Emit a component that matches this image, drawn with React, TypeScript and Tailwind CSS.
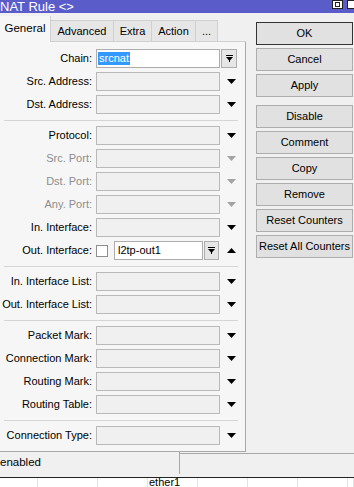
import React from 'react';

const FONT = { fontFamily: '"Liberation Sans", Arial, sans-serif' };

const Tri: React.FC<{ up?: boolean; dim?: boolean }> = ({ up, dim }) => (
  <svg width="9" height="5" viewBox="0 0 9 5" className="shrink-0">
    <polygon points={up ? '0,5 9,5 4.5,0' : '0,0 9,0 4.5,5'} fill={dim ? '#a3a3a3' : '#000'} />
  </svg>
);

// small "drop-down with bar" button used on chain / interface fields
const DropBtn: React.FC<{ className: string }> = ({ className }) => (
  <div className={`flex h-[19px] items-center justify-center border border-[#adadad] bg-[#e6e6e6] ${className}`}>
    <svg width="7" height="7" viewBox="0 0 7 7">
      <rect x="0" y="0" width="7" height="1" fill="#000" />
      <polygon points="0,2 7,2 3.5,6" fill="#000" />
      <rect x="3" y="5" width="1" height="2" fill="#000" />
    </svg>
  </div>
);

const Field: React.FC = () => (
  <div className="h-[19px] w-[124px] shrink-0 border border-[#b9b9b9] bg-[#f0f0f0]" />
);

const Row: React.FC<{ label: string; dim?: boolean; children?: React.ReactNode }> = ({ label, dim, children }) => (
  <div className="flex h-[23px] items-center">
    <div className={dim ? 'w-[92px] shrink-0 text-right text-[#8d8d8d]' : 'w-[92px] shrink-0 text-right text-black'}>{label}</div>
    <div className="ml-[4px] flex items-center">
      {children ?? (
        <>
          <Field />
          <div className="ml-[7px]">
            <Tri dim={dim} />
          </div>
        </>
      )}
    </div>
  </div>
);

const Sep: React.FC = () => <div className="mx-[4px] mb-[3px] mt-[4px] h-px w-[234px] bg-[#d5d5d5]" />;

const Btn: React.FC<{ label: string; main?: boolean; className?: string }> = ({ label, main, className = '' }) => (
  <div
    className={`flex h-[23px] w-[97px] items-center justify-center bg-[#e1e1e1] text-black ${
      main ? 'border border-[#333333]' : 'border border-[#adadad]'
    } ${className}`}
  >
    {label}
  </div>
);

export default function App() {
  const tabs = ['Advanced', 'Extra', 'Action', '...'];
  const tabW = ['w-[63px]', 'w-[38px]', 'w-[44px]', 'w-[22px]'];
  const cols = ['w-[38px]', 'w-[60px]', 'w-[50px]', 'w-[50px]', 'w-[50px]', 'w-[50px]', 'w-[50px]', 'w-[6px]'];

  return (
    <div className="flex h-[487px] w-[354px] flex-col overflow-hidden bg-[#f0f0f0] text-[11px]" style={FONT}>
      {/* title bar */}
      <div className="flex h-[13px] shrink-0 items-center justify-between bg-[#5a5dc9] text-[13px] leading-none text-white">
        <span>NAT Rule &lt;&gt;</span>
        <div className="flex items-start self-start">
          <div className="mr-[4px] h-[9px] w-[11px] border border-[#222] bg-white">
            <div className="ml-[2px] mt-[1px] h-[5px] w-[5px] border border-[#222]" />
          </div>
          <div className="h-[9px] w-[7px] border border-r-0 border-[#222] bg-white" />
        </div>
      </div>

      <div className="flex h-[439px] shrink-0">
        {/* left: tabs + panel */}
        <div className="flex w-[246px] shrink-0 flex-col">
          <div className="flex h-[29px] items-end">
            <div className="flex h-[26px] w-[51px] items-center justify-center border-r border-[#d0d0d0] bg-[#f6f6f6] pb-[1px] text-[11.5px]">
              General
            </div>
            {tabs.map((t, i) => (
              <div
                key={t}
                className={`flex h-[22px] items-center justify-center border-r border-t border-b border-[#d0d0d0] bg-[#e6e6e6] ${tabW[i]}`}
              >
                {t}
              </div>
            ))}
            <div className="h-px flex-1 bg-[#d0d0d0]" />
          </div>

          <div className="flex-1 border-b border-r border-[#a8a8a8] bg-[#f6f6f6] pt-[5px]">
            <Row label="Chain:">
              <div className="flex h-[19px] w-[124px] items-center border border-[#adadad] bg-white px-[1px]">
                <span className="bg-[#3399ff] px-[1px] leading-[13px] text-white">srcnat</span>
              </div>
              <DropBtn className="ml-[1px] w-[16px]" />
            </Row>
            <Row label="Src. Address:" />
            <Row label="Dst. Address:" />
            <Sep />
            <Row label="Protocol:" />
            <Row label="Src. Port:" dim />
            <Row label="Dst. Port:" dim />
            <Row label="Any. Port:" dim />
            <Row label="In. Interface:" />
            <Row label="Out. Interface:">
              <div className="h-[12px] w-[12px] border border-[#8f8f8f] bg-white" />
              <div className="ml-[6px] flex h-[19px] w-[89px] items-center border border-[#adadad] bg-white pl-[3px]">
                l2tp-out1
              </div>
              <DropBtn className="ml-[1px] w-[15px]" />
              <div className="ml-[8px]">
                <Tri up />
              </div>
            </Row>
            <Sep />
            <Row label="In. Interface List:" />
            <Row label="Out. Interface List:" />
            <Sep />
            <Row label="Packet Mark:" />
            <Row label="Connection Mark:" />
            <Row label="Routing Mark:" />
            <Row label="Routing Table:" />
            <Sep />
            <Row label="Connection Type:" />
          </div>
        </div>

        {/* right: buttons */}
        <div className="ml-[10px] flex flex-col gap-[3px] pt-[9px]">
          <Btn label="OK" main />
          <Btn label="Cancel" />
          <Btn label="Apply" />
          <Btn label="Disable" className="mt-[5px]" />
          <Btn label="Comment" />
          <Btn label="Copy" />
          <Btn label="Remove" />
          <Btn label="Reset Counters" />
          <Btn label="Reset All Counters" />
        </div>
      </div>

      {/* status bar */}
      <div className="flex h-[25px] shrink-0">
        <div className="flex h-[22px] w-[180px] items-center border-r border-[#a8a8a8] text-[11.5px] text-black">enabled</div>
        <div className="mt-[1px] h-[20px] flex-1 border-t border-[#a8a8a8]" />
      </div>

      {/* list behind the dialog */}
      <div className="h-px shrink-0 bg-[#222]" />
      <div className="flex flex-1 bg-white">
        {cols.map((c, i) => (
          <div key={i} className={`h-full shrink-0 border-r border-[#e3e3e3] leading-[9px] ${c}`}>
            {i === 3 ? <span className="pl-[1px]">ether1</span> : null}
          </div>
        ))}
      </div>
    </div>
  );
}
